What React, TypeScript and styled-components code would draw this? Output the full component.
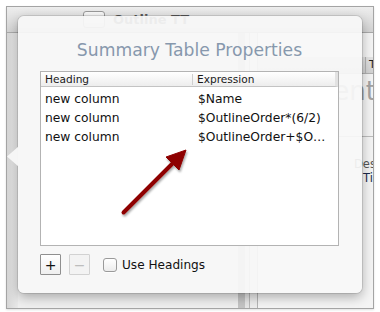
import React from "react";
import styled, { createGlobalStyle } from "styled-components";

const Global = createGlobalStyle`
  * { box-sizing: border-box; }
  html, body { margin: 0; padding: 0; background: #ffffff; }
  body { width: 380px; height: 312px; overflow: hidden; font-family: "DejaVu Sans", "Liberation Sans", sans-serif; }
`;

const Frame = styled.div`
  position: relative;
  margin: 6px 0 0 6px;
  width: 368px;
  height: 303px;
  border: 1px solid #a4a4a4;
  overflow: hidden;
  box-shadow: 0 1px 2px rgba(0, 0, 0, 0.12);
`;

const Scene = styled.div`
  display: flex;
  flex-direction: column;
  width: 100%;
  height: 100%;
  background: #ececec;
`;

const Toolbar = styled.div`
  height: 26px;
  flex: none;
  display: flex;
  align-items: center;
  gap: 8px;
  padding-left: 76px;
  background: linear-gradient(#ededed, #d3d3d3);
  border-bottom: 1px solid #a9a9a9;
`;

const ToolIcon = styled.div`
  width: 22px;
  height: 17px;
  border: 1px solid #9a9a9a;
  border-radius: 3px;
  background: linear-gradient(#fafafa, #dedede);
`;

const ToolLabel = styled.span`
  font-size: 13px;
  font-weight: bold;
  color: #5a5a5a;
`;

const Body = styled.div`
  flex: 1;
  display: flex;
  min-height: 0;
`;

const LeftPane = styled.div`
  width: 11px;
  flex: none;
  background: linear-gradient(to right, #d6d6d6, #e9e9e9);
`;

const DocArea = styled.div`
  width: 220px;
  flex: none;
  background: #efefef;
`;

const Splitter = styled.div`
  width: 20px;
  flex: none;
  background: linear-gradient(
    to right,
    #c4c4c4 0 7px,
    #e6e6e6 7px 11px,
    #b9b9b9 11px 12px,
    #ededed 12px 19px,
    #b5b5b5 19px 20px
  );
`;

const Inspector = styled.div`
  flex: 1;
  display: flex;
  flex-direction: column;
  padding-top: 24px;
  background: #f4f4f4;
  min-width: 0;
`;

const InspHeader = styled.div`
  height: 17px;
  display: flex;
  background: linear-gradient(#e4e4e4, #d2d2d2);
  border-bottom: 1px solid #b0b0b0;
  font-size: 11px;
  color: #222;
`;

const InspHeadCell = styled.div<{ $w?: number }>`
  width: ${(p) => (p.$w ? `${p.$w}px` : "auto")};
  flex: ${(p) => (p.$w ? "none" : "1")};
  padding-left: 3px;
  line-height: 16px;
  border-right: ${(p) => (p.$w ? "1px solid #b5b5b5" : "none")};
  white-space: nowrap;
`;

const BigText = styled.div`
  font-size: 26px;
  color: #a3a3a3;
  text-align: right;
  margin-right: -3px;
  line-height: 34px;
  white-space: nowrap;
`;

const InspRule = styled.div`
  margin-top: 28px;
  height: 1px;
  background: #bcbcbc;
`;

const InspLine = styled.div<{ $top: number; $indent: number; $color: string }>`
  margin-top: ${(p) => p.$top}px;
  padding-left: ${(p) => p.$indent}px;
  font-size: 11.5px;
  line-height: 14px;
  color: ${(p) => p.$color};
  white-space: nowrap;
`;

const Popover = styled.div`
  position: absolute;
  left: 11px;
  top: 9px;
  width: 344px;
  height: 277px;
  display: flex;
  flex-direction: column;
  padding: 24px 23px 18px 22px;
  border-radius: 6px;
  background: rgba(247, 247, 247, 0.93);
  box-shadow: 0 0 0 1px rgba(0, 0, 0, 0.1), 0 4px 12px rgba(0, 0, 0, 0.3);
`;

const Pointer = styled.span`
  position: absolute;
  left: -11px;
  top: 130px;
  width: 12px;
  height: 21px;
  background: rgba(247, 247, 247, 0.97);
  clip-path: polygon(100% 0, 0 50%, 100% 100%);
`;

const Title = styled.h1`
  margin: 0 0 11px;
  font-size: 17.2px;
  line-height: 20px;
  font-weight: normal;
  text-align: center;
  color: #8798ad;
`;

const Table = styled.div`
  height: 175px;
  flex: none;
  border: 1px solid #b3b3b3;
  background: #ffffff;
  display: flex;
  flex-direction: column;
`;

const HeaderRow = styled.div`
  height: 15px;
  display: flex;
  background: linear-gradient(#ffffff, #ededed);
  border-bottom: 1px solid #c3c3c3;
  border-right: 3px solid #e2e2e2;
`;

const HeadCell = styled.div<{ $w?: number }>`
  width: ${(p) => (p.$w ? `${p.$w}px` : "auto")};
  flex: ${(p) => (p.$w ? "none" : "1")};
  padding-left: 4px;
  font-size: 10.6px;
  line-height: 14px;
  color: #1a1a1a;
  position: relative;
  &::after {
    content: "";
    display: ${(p) => (p.$w ? "block" : "none")};
    position: absolute;
    right: 0;
    top: 2px;
    bottom: 1px;
    width: 1px;
    background: #cfcfcf;
  }
`;

const Rows = styled.div`
  padding-top: 3px;
  display: flex;
  flex-direction: column;
`;

const Row = styled.div`
  height: 19px;
  display: flex;
  align-items: center;
`;

const Cell = styled.div<{ $w?: number }>`
  width: ${(p) => (p.$w ? `${p.$w}px` : "auto")};
  flex: ${(p) => (p.$w ? "none" : "1")};
  padding-left: 4px;
  font-size: 12.3px;
  line-height: 19px;
  color: #111;
  white-space: nowrap;
`;

const Footer = styled.div`
  margin-top: 8px;
  height: 21px;
  display: flex;
  align-items: center;
`;

const SquareButton = styled.button<{ $disabled?: boolean }>`
  width: 21px;
  height: 21px;
  margin: 0 8px 0 0;
  padding: 0;
  display: flex;
  align-items: center;
  justify-content: center;
  border: 1px solid ${(p) => (p.$disabled ? "#d2d2d2" : "#8f8f8f")};
  border-radius: 1px;
  background: ${(p) => (p.$disabled ? "#f3f3f3" : "linear-gradient(#ffffff, #efefef)")};
  color: ${(p) => (p.$disabled ? "#bdbdbd" : "#111")};
  font-family: "DejaVu Sans", sans-serif;
  font-size: 14px;
  line-height: 1;
`;

const CheckLabel = styled.label`
  margin-left: 5px;
  display: flex;
  align-items: center;
  gap: 5px;
  font-size: 12.1px;
  color: #111;
`;

const CheckBox = styled.span`
  width: 14px;
  height: 14px;
  border: 1px solid #9a9a9a;
  border-radius: 3px;
  background: linear-gradient(#ffffff, #ececec);
  box-shadow: 0 1px 0 rgba(255, 255, 255, 0.8);
`;

const Annotation = styled.svg`
  position: absolute;
  left: 0;
  top: 0;
  width: 366px;
  height: 301px;
  pointer-events: none;
  overflow: visible;
`;

const rows = [
  { heading: "new column", expr: "$Name" },
  { heading: "new column", expr: "$OutlineOrder*(6/2)" },
  { heading: "new column", expr: "$OutlineOrder+$O…" },
];

export default function App() {
  return (
    <>
      <Global />
      <Frame>
        <Scene>
          <Toolbar>
            <ToolIcon />
            <ToolLabel>Outline TT</ToolLabel>
          </Toolbar>
          <Body>
            <LeftPane />
            <DocArea />
            <Splitter />
            <Inspector>
              <InspHeader>
                <InspHeadCell $w={108} />
                <InspHeadCell>Type</InspHeadCell>
              </InspHeader>
              <BigText>Content</BigText>
              <InspRule />
              <InspLine $top={20} $indent={96} $color="#555">
                Description
              </InspLine>
              <InspLine $top={0} $indent={105} $color="#1b2a4a">
                Time
              </InspLine>
            </Inspector>
          </Body>
        </Scene>

        <Popover>
          <Pointer />
          <Title>Summary Table Properties</Title>
          <Table>
            <HeaderRow>
              <HeadCell $w={152}>Heading</HeadCell>
              <HeadCell>Expression</HeadCell>
            </HeaderRow>
            <Rows>
              {rows.map((r, i) => (
                <Row key={i}>
                  <Cell $w={153}>{r.heading}</Cell>
                  <Cell>{r.expr}</Cell>
                </Row>
              ))}
            </Rows>
          </Table>
          <Footer>
            <SquareButton>+</SquareButton>
            <SquareButton $disabled>−</SquareButton>
            <CheckLabel>
              <CheckBox />
              Use Headings
            </CheckLabel>
          </Footer>
        </Popover>

        <Annotation viewBox="7 7 366 301">
          <defs>
            <filter id="sh" x="-20%" y="-20%" width="140%" height="140%">
              <feDropShadow dx="1" dy="2" stdDeviation="1.2" floodColor="#000" floodOpacity="0.35" />
            </filter>
          </defs>
          <g filter="url(#sh)" fill="#8e0000" stroke="#8e0000">
            <line x1="123.5" y1="212.5" x2="174" y2="162" strokeWidth="4" strokeLinecap="round" />
            <polygon points="186,150 166,157 179,170" strokeWidth="1" strokeLinejoin="round" />
          </g>
        </Annotation>
      </Frame>
    </>
  );
}
